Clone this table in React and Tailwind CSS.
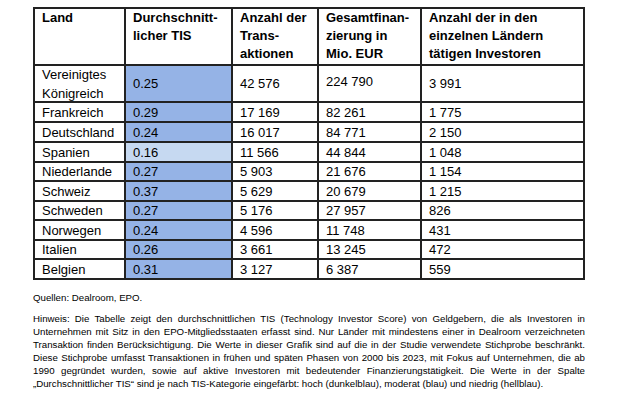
import React from "react";

const rows = [
  { land: ["Vereinigtes", "Königreich"], tis: "0.25", lvl: "m", tx: "42 576", fin: "224 790", inv: "3 991" },
  { land: ["Frankreich"], tis: "0.29", lvl: "m", tx: "17 169", fin: "82 261", inv: "1 775" },
  { land: ["Deutschland"], tis: "0.24", lvl: "m", tx: "16 017", fin: "84 771", inv: "2 150" },
  { land: ["Spanien"], tis: "0.16", lvl: "l", tx: "11 566", fin: "44 844", inv: "1 048" },
  { land: ["Niederlande"], tis: "0.27", lvl: "m", tx: "5 903", fin: "21 676", inv: "1 154" },
  { land: ["Schweiz"], tis: "0.37", lvl: "m", tx: "5 629", fin: "20 679", inv: "1 215" },
  { land: ["Schweden"], tis: "0.27", lvl: "m", tx: "5 176", fin: "27 957", inv: "826" },
  { land: ["Norwegen"], tis: "0.24", lvl: "m", tx: "4 596", fin: "11 748", inv: "431" },
  { land: ["Italien"], tis: "0.26", lvl: "m", tx: "3 661", fin: "13 245", inv: "472" },
  { land: ["Belgien"], tis: "0.31", lvl: "m", tx: "3 127", fin: "6 387", inv: "559" },
];

const cell = "border-l-2 border-t-2 border-[#222] pl-[7px] flex flex-col justify-center leading-[19px]";
const head = "border-l-2 border-t-2 border-[#222] pl-[7px] font-bold leading-[18px]";

const lines = [
  "Hinweis: Die Tabelle zeigt den durchschnittlichen TIS (Technology Investor Score) von Geldgebern, die als Investoren in",
  "Unternehmen mit Sitz in den EPO-Mitgliedsstaaten erfasst sind. Nur Länder mit mindestens einer in Dealroom verzeichneten",
  "Transaktion finden Berücksichtigung. Die Werte in dieser Grafik sind auf die in der Studie verwendete Stichprobe beschränkt.",
  "Diese Stichprobe umfasst Transaktionen in frühen und späten Phasen von 2000 bis 2023, mit Fokus auf Unternehmen, die ab",
  "1990 gegründet wurden, sowie auf aktive Investoren mit bedeutender Finanzierungstätigkeit. Die Werte in der Spalte",
];

export default function App() {
  return (
    <div className="w-[620px] h-[400px] bg-white pt-[7px] pl-[33px] text-black font-['Liberation_Sans',Arial,sans-serif] overflow-hidden">
      <div className="w-[552px] grid grid-cols-[91px_107px_86px_103px_163px] grid-rows-[57px_37px_20px_20px_20px_19px_20px_19px_20px_19px_20px] border-r-2 border-b-2 border-[#222] text-[13px]">
        <div className={head}>Land</div>
        <div className={head}>Durchschnitt-<br />licher TIS</div>
        <div className={head}>Anzahl der<br />Trans-<br />aktionen</div>
        <div className={head}>Gesamtfinan-<br />zierung in<br />Mio. EUR</div>
        <div className={head}>Anzahl der in den<br />einzelnen Ländern<br />tätigen Investoren</div>
        {rows.map((r, i) => (
          <React.Fragment key={i}>
            <div className={cell}>
              {r.land.map((l) => (
                <span key={l} className="block">{l}</span>
              ))}
            </div>
            <div className={cell + (r.lvl === "l" ? " bg-[#c6d9f1]" : " bg-[#95b3e6]")}>{r.tis}</div>
            <div className={cell}>{r.tx}</div>
            <div className={i === 0 ? "border-l-2 border-t-2 border-[#222] pl-[7px] pt-[6px] leading-[19px]" : cell}>{r.fin}</div>
            <div className={cell}>{r.inv}</div>
          </React.Fragment>
        ))}
      </div>
      <div className="w-[552px] text-[9.7px] leading-[13px] mt-[11px]">
        <p>Quellen: Dealroom, EPO.</p>
        <div className="mt-[8px]">
          {lines.map((l) => (
            <p key={l} className="text-justify [text-align-last:justify]">{l}</p>
          ))}
          <p>„Durchschnittlicher TIS“ sind je nach TIS-Kategorie eingefärbt: hoch (dunkelblau), moderat (blau) und niedrig (hellblau).</p>
        </div>
      </div>
    </div>
  );
}
